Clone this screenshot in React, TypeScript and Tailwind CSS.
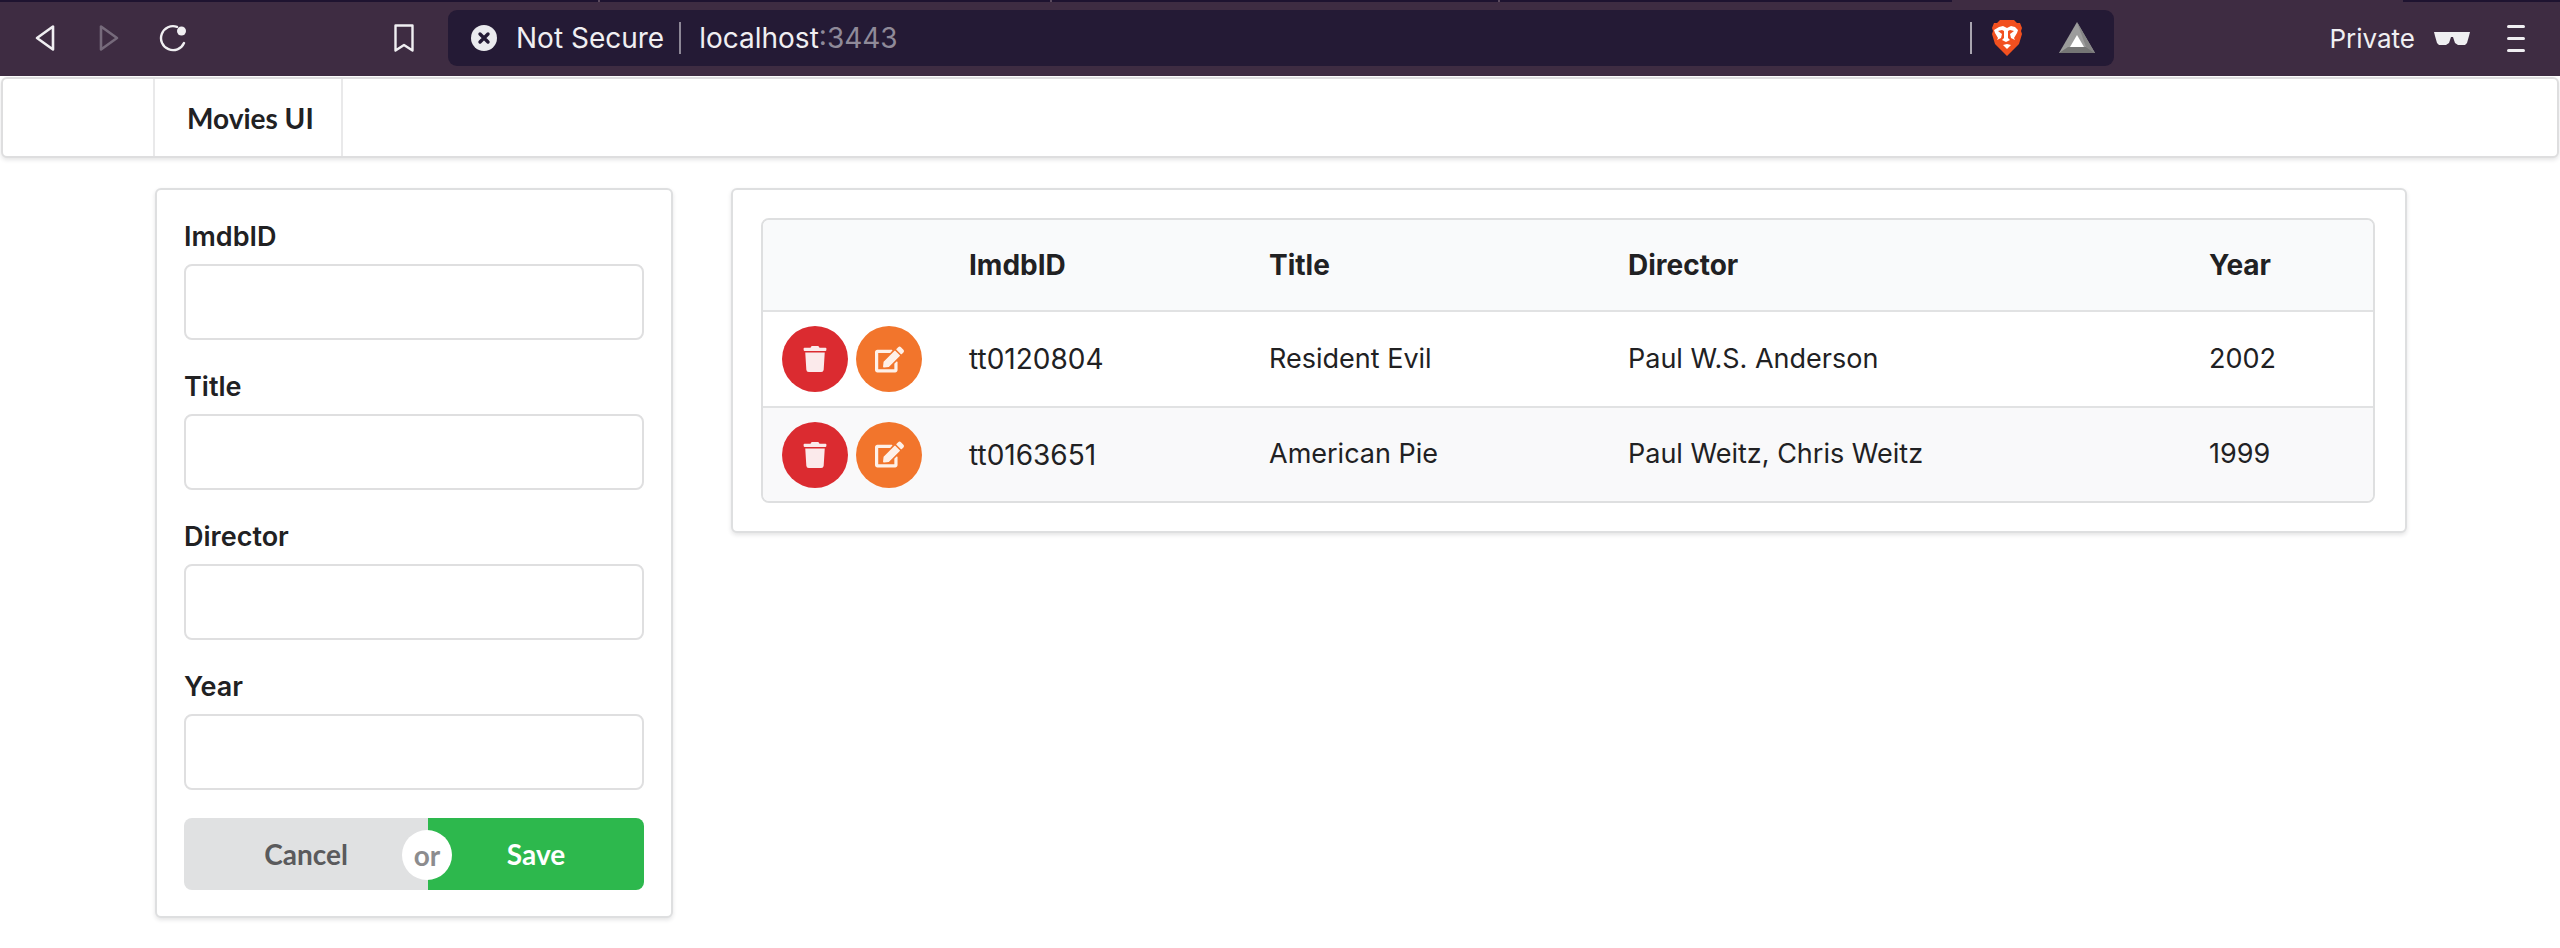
import { FaEdit, FaTrash } from 'react-icons/fa';

const movies = [
  { id: 'tt0120804', title: 'Resident Evil', director: 'Paul W.S. Anderson', year: '2002' },
  { id: 'tt0163651', title: 'American Pie', director: 'Paul Weitz, Chris Weitz', year: '1999' },
];

const fields = ['ImdbID', 'Title', 'Director', 'Year'];

const BraveLogo = () => (
  <svg width="30" height="36" viewBox="0 0 30 36" className="shrink-0">
    <path d="M8 0h14l3 3h3l2 5-1 3 1 3-3 10-6 6-6 6-6-6-6-6-3-10 1-3-1-3 2-5h3z" fill="#f2501f" />
    <path d="M7 7l4-1 4 2 4-2 4 1 3 3-1 3-3 5 1 2-4-2-1-4 4-3-4-1-2 1v7l2 2-4 2-4-2 2-2v-7l-2-1-4 1 4 3-1 4-4 2 1-2-3-5-1-3z" fill="#fff" />
    <path d="M11 25l4-1 4 1-4 4z" fill="#fff" />
  </svg>
);

const BatLogo = () => (
  <svg width="36" height="32" viewBox="0 0 36 32" className="shrink-0">
    <path d="M18 0L0 31h36z" fill="#9c9c9c" />
    <path d="M18 0l18 31-9-6z" fill="#868686" />
    <path d="M0 31h36l-9-6H9z" fill="#757575" />
    <path d="M18 13l7 12H11z" fill="#fff" />
  </svg>
);

const App = () => {
  return (
    <div className="h-[948px] overflow-hidden bg-white font-['Inter',sans-serif] text-[#212123]">
      {/* browser tab strip */}
      <div className="flex h-[2px] bg-[#3e2c42]">
        <div className="w-[600px] border-r-2 border-[#5a4a5e] bg-[#1e1330]" />
        <div className="w-[452px] border-r-2 border-[#5a4a5e] bg-[#1e1330]" />
        <div className="w-[448px] border-r-2 border-[#5a4a5e] bg-[#1e1330]" />
        <div className="w-[452px] bg-[#1e1330]" />
        <div className="ml-[451px] w-[157px] bg-[#1e1330]" />
      </div>

      {/* browser toolbar */}
      <div className="flex h-[74px] items-center bg-[#3e2c42] pb-[2px]">
        <svg width="20" height="28" viewBox="0 0 20 28" className="ml-[35px] shrink-0" fill="none" stroke="#f0eff2" strokeWidth="2.6" strokeLinejoin="round">
          <path d="M2 14L18 2.5v23z" />
        </svg>
        <svg width="20" height="28" viewBox="0 0 20 28" className="ml-[44px] shrink-0" fill="none" stroke="#766a7b" strokeWidth="2.6" strokeLinejoin="round">
          <path d="M18 14L2 2.5v23z" />
        </svg>
        <svg width="28" height="28" viewBox="0 0 28 28" className="ml-[40px] shrink-0" fill="none">
          <path d="M25 19A12 12 0 1 1 18 2.800" stroke="#f0eff2" strokeWidth="2.4" strokeLinecap="round" />
          <circle cx="22.5" cy="7" r="4.5" fill="#f0eff2" />
        </svg>
        <svg width="20" height="28" viewBox="0 0 20 28" className="ml-[207px] shrink-0" fill="none" stroke="#f0eff2" strokeWidth="2.4" strokeLinejoin="round">
          <path d="M1.5 1.5h17v25L10 21l-8.500 5.500z" />
        </svg>

        <div className="ml-[34px] flex h-[56px] w-[1666px] shrink-0 items-center rounded-[9px] bg-[#241a35] pl-[23px] pr-[19px] text-[28px] text-[#f0eff2]">
          <svg width="26" height="26" viewBox="0 0 26 26" className="shrink-0">
            <circle cx="13" cy="13" r="13" fill="#eaeaee" />
            <path d="M9 9l8 8M17 9l-8 8" stroke="#241a35" strokeWidth="3.4" strokeLinecap="round" />
          </svg>
          <span className="ml-[19px]">Not Secure</span>
          <div className="ml-[15px] h-[32px] w-[2px] bg-[#8d8796]" />
          <span className="ml-[18px]">localhost</span>
          <span className="text-[#8f8a99]">:3443</span>

          <div className="ml-auto h-[32px] w-[2px] bg-[#a9a5b0]" />
          <div className="ml-[20px]"><BraveLogo /></div>
          <div className="ml-[37px]"><BatLogo /></div>
        </div>

        <div className="ml-auto flex items-center pr-[35px]">
          <span className="text-[26px] text-[#f0eff2]">Private</span>
          <svg width="36" height="13" viewBox="0 0 36 13" className="ml-[19px]" fill="#efeff1">
            <path d="M0 0h36l-1 4-2 7-2 2h-7l-3-2-2-6h-2l-2 6-3 2H5l-2-2-2-7z" />
          </svg>
          <div className="ml-[37px] flex w-[18px] flex-col gap-[9px]">
            <div className="h-[3px] rounded-full bg-[#f0eff2]" />
            <div className="h-[3px] rounded-full bg-[#f0eff2]" />
            <div className="h-[3px] rounded-full bg-[#f0eff2]" />
          </div>
        </div>
      </div>

      {/* app menu */}
      <div className="mx-px mt-px flex h-[81px] rounded-[6px] border-2 border-[#dededf] bg-white shadow-[0_2px_4px_rgba(34,36,38,0.12)]">
        <div className="w-[152px] border-r-2 border-[#e9e9ea]" />
        <div className="flex w-[188px] items-center border-r-2 border-[#e9e9ea] pl-[32px] font-['Lato',sans-serif] text-[28px] font-bold">
          Movies UI
        </div>
      </div>

      <div className="mt-[30px] flex items-start pl-[155px]">
        {/* movie form */}
        <form className="flex w-[518px] flex-col gap-[26px] rounded-[6px] border-2 border-[#dedfe0] bg-white px-[27px] pb-[26px] pt-[26px] shadow-[0_2px_4px_rgba(34,36,38,0.12)]">
          {fields.map((field) => (
            <div key={field}>
              <label className="block text-[27px] font-semibold leading-[42px]">{field}</label>
              <input type="text" className="mt-[6px] block h-[76px] w-full rounded-[8px] border-2 border-[#dfdfe0] bg-white" />
            </div>
          ))}
          <div className="relative mt-[2px] flex h-[72px] font-['Lato',sans-serif] text-[28px] font-bold">
            <button type="button" className="w-[244px] rounded-l-[8px] bg-[#e0e1e2] text-[#5a5a5c]">
              Cancel
            </button>
            <button type="button" className="flex-1 rounded-r-[8px] bg-[#2db84d] text-white">
              Save
            </button>
            <div className="absolute left-[218px] top-[12px] flex h-[50px] w-[50px] items-center justify-center rounded-full bg-white text-[28px] font-bold text-[#8c8c8e]">
              or
            </div>
          </div>
        </form>

        {/* movie table */}
        <div className="ml-[58px] w-[1676px] rounded-[6px] border-2 border-[#dedfe0] bg-white py-[28px] pl-[28px] pr-[30px] shadow-[0_2px_4px_rgba(34,36,38,0.12)]">
          <div className="overflow-hidden rounded-[8px] border-2 border-[#dedfe0]">
            <table className="w-full table-fixed border-separate border-spacing-0 text-left text-[27px]">
              <colgroup>
                <col className="w-[206px]" />
                <col className="w-[300px]" />
                <col className="w-[359px]" />
                <col className="w-[581px]" />
                <col />
              </colgroup>
              <thead>
                <tr className="bg-[#f9fafb] text-[28px]">
                  <th className="h-[92px] border-b-2 border-[#e1e2e3]" />
                  <th className="h-[92px] border-b-2 border-[#e1e2e3] font-bold">ImdbID</th>
                  <th className="h-[92px] border-b-2 border-[#e1e2e3] font-bold">Title</th>
                  <th className="h-[92px] border-b-2 border-[#e1e2e3] font-bold">Director</th>
                  <th className="h-[92px] border-b-2 border-[#e1e2e3] font-bold">Year</th>
                </tr>
              </thead>
              <tbody>
                {movies.map((movie, i) => (
                  <tr key={movie.id} className={i === 1 ? 'h-[93px] bg-[#f9f9fa]' : 'h-[96px]'}>
                    <td className={i === 0 ? 'border-b-2 border-[#e1e2e3] pl-[19px]' : 'pl-[19px]'}>
                      <div className="flex gap-[8px]">
                        <button type="button" className="flex h-[66px] w-[66px] items-center justify-center rounded-full bg-[#db2b30] text-[#fbeaeb]">
                          <FaTrash size={26} />
                        </button>
                        <button type="button" className="flex h-[66px] w-[66px] items-center justify-center rounded-full bg-[#f2752c] text-[#fef0e8]">
                          <FaEdit size={29} />
                        </button>
                      </div>
                    </td>
                    <td className={i === 0 ? 'border-b-2 border-[#e1e2e3] text-[28px]' : 'text-[28px]'}>{movie.id}</td>
                    <td className={i === 0 ? 'border-b-2 border-[#e1e2e3]' : ''}>{movie.title}</td>
                    <td className={i === 0 ? 'border-b-2 border-[#e1e2e3]' : ''}>{movie.director}</td>
                    <td className={i === 0 ? 'border-b-2 border-[#e1e2e3]' : ''}>{movie.year}</td>
                  </tr>
                ))}
              </tbody>
            </table>
          </div>
        </div>
      </div>
    </div>
  );
};

export default App;
